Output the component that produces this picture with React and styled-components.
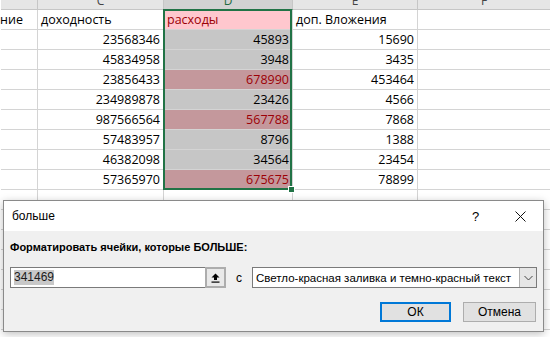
import React from 'react';
import styled, { createGlobalStyle } from 'styled-components';

const GlobalStyle = createGlobalStyle`
  html, body {
    margin: 0;
    padding: 0;
    background: #ffffff;
    overflow: hidden;
  }
`;

const cols = ['37px', '126px', '129px', '125px', '133px'];

const data = [
  [23568346, 45893, 15690],
  [45834958, 3948, 3435],
  [23856433, 678990, 453464],
  [234989878, 23426, 4566],
  [987566564, 567788, 7868],
  [57483957, 8796, 1388],
  [46382098, 34564, 23454],
  [57365970, 675675, 78899],
];

const LIMIT = 341469;

const Page = styled.div`
  position: relative;
  width: 550px;
  height: 337px;
  overflow: hidden;
  font-family: 'Open Sans', 'Liberation Sans', sans-serif;
`;

const Sheet = styled.div`
  display: flex;
  flex-direction: column;
  margin-left: 1px;
`;

const Row = styled.div`
  display: grid;
  grid-template-columns: ${cols.join(' ')};
  height: ${(p) => p.$h || 20}px;
`;

// column letters are cut off by the top edge, as in the screenshot
const HeadCell = styled.div`
  background: ${(p) => (p.$active ? '#d2d2d2' : '#e6e6e6')};
  border-right: 1px solid #c6c6c6;
  border-bottom: 1px solid ${(p) => (p.$active ? '#217346' : '#c6c6c6')};
  color: ${(p) => (p.$active ? '#1e6b41' : '#444')};
  font-size: 12px;
  line-height: 2px;
  text-align: center;
  overflow: hidden;
  box-sizing: border-box;
`;

const Cell = styled.div`
  box-sizing: border-box;
  border-right: 1px solid #d4d4d4;
  border-bottom: 1px solid #d4d4d4;
  background: ${(p) => p.$bg || '#ffffff'};
  color: ${(p) => p.$color || '#000'};
  font-size: 12.5px;
  line-height: 19px;
  padding: 0 ${(p) => p.$pr || 3}px 0 3px;
  text-align: ${(p) => (p.$num ? 'right' : 'left')};
  white-space: nowrap;
  overflow: ${(p) => (p.$spill ? 'visible' : 'hidden')};
  direction: ${(p) => (p.$spill === 'left' ? 'rtl' : 'ltr')};
  position: relative;
`;

const Selection = styled.div`
  position: absolute;
  left: 163px;
  top: 9px;
  width: 129px;
  height: 181px;
  border: 2px solid #217346;
  box-sizing: border-box;
  pointer-events: none;

  &::after {
    content: '';
    position: absolute;
    right: -5px;
    bottom: -5px;
    width: 5px;
    height: 5px;
    background: #217346;
    border: 1px solid #fff;
  }
`;

const Dialog = styled.div`
  position: absolute;
  left: 3px;
  top: 200px;
  width: 541px;
  height: 132px;
  box-sizing: border-box;
  border: 1px solid #8a8a8a;
  background: #f0f0f0;
  box-shadow: 0 2px 8px rgba(0, 0, 0, 0.25);
  display: flex;
  flex-direction: column;
  font-family: 'Liberation Sans', Arial, sans-serif;
  font-size: 11.5px;
  color: #000;
`;

const TitleBar = styled.div`
  height: 30px;
  background: #ffffff;
  display: flex;
  align-items: center;
  padding: 0 0 0 8px;
  font-size: 12px;
`;

const Title = styled.span`
  flex: 1;
`;

const TitleIcon = styled.span`
  width: 45px;
  display: flex;
  justify-content: center;
  align-items: center;
  font-size: ${(p) => p.$size || 12}px;
`;

const Body = styled.div`
  flex: 1;
  display: flex;
  flex-direction: column;
  padding: 9px 6px 0 6px;
`;

const Label = styled.div`
  font-weight: bold;
  font-size: 11px;
  height: 14px;
  line-height: 14px;
`;

const InputRow = styled.div`
  display: flex;
  align-items: center;
  margin-top: 13px;
  height: 21px;
`;

const InputBox = styled.div`
  width: 195px;
  height: 21px;
  box-sizing: border-box;
  border: 1px solid #7a7a7a;
  border-right: none;
  background: #fff;
  display: flex;
  align-items: center;
  padding-left: 3px;
`;

const Selected = styled.span`
  background: #c8c8c8;
  color: #1a1a1a;
  font-size: 12px;
  line-height: 15px;
`;

const RefButton = styled.div`
  width: 21px;
  height: 21px;
  box-sizing: border-box;
  border: 2px solid #adadad;
  background: #e9e9e9;
  display: flex;
  align-items: center;
  justify-content: center;
`;

const Conj = styled.span`
  width: 26px;
  text-align: center;
  font-size: 12px;
`;

const Combo = styled.div`
  width: 285px;
  height: 21px;
  box-sizing: border-box;
  border: 1px solid #7a7a7a;
  background: #fff;
  display: flex;
  align-items: center;
  font-size: 11.5px;
  padding-left: 3px;
`;

const ComboText = styled.span`
  flex: 1;
  white-space: nowrap;
  overflow: hidden;
`;

const ComboArrow = styled.div`
  width: 17px;
  height: 19px;
  box-sizing: border-box;
  border-left: 1px solid #adadad;
  background: #e6e6e6;
  display: flex;
  align-items: center;
  justify-content: center;
`;

const ButtonRow = styled.div`
  display: flex;
  justify-content: flex-end;
  gap: 12px;
  margin-top: 14px;
  padding-right: 1px;
`;

const Button = styled.div`
  width: ${(p) => p.$w}px;
  height: 20px;
  box-sizing: border-box;
  background: #e1e1e1;
  border: ${(p) => (p.$primary ? '2px solid #0078d7' : '1px solid #adadad')};
  display: flex;
  align-items: center;
  justify-content: center;
  font-size: 12px;
`;

export default function App() {
  const header = ['', 'C', 'D', 'E', 'F'];
  return (
    <Page>
      <GlobalStyle />
      <Sheet>
        <Row $h={10}>
          {header.map((h, i) => (
            <HeadCell key={i} $active={h === 'D'}>
              {h}
            </HeadCell>
          ))}
        </Row>
        <Row>
          <Cell $num $pr={14} $spill="left">ние</Cell>
          <Cell>доходность</Cell>
          <Cell $bg="#ffc7ce" $color="#9c0006">расходы</Cell>
          <Cell $spill="right">доп. Вложения</Cell>
          <Cell />
        </Row>
        {data.map((r, i) => {
          const hot = r[1] > LIMIT;
          return (
            <Row key={i}>
              <Cell />
              <Cell $num>{r[0]}</Cell>
              <Cell $num $bg={hot ? '#c4989c' : '#c6c6c6'} $color={hot ? '#9c0006' : '#000'}>
                {r[1]}
              </Cell>
              <Cell $num>{r[2]}</Cell>
              <Cell />
            </Row>
          );
        })}
        {[0, 1, 2, 3, 4, 5, 6].map((i) => (
          <Row key={'e' + i}>
            <Cell />
            <Cell />
            <Cell />
            <Cell />
            <Cell />
          </Row>
        ))}
      </Sheet>
      <Selection />

      <Dialog>
        <TitleBar>
          <Title>больше</Title>
          <TitleIcon $size={13}>?</TitleIcon>
          <TitleIcon>
            <svg width="11" height="11" viewBox="0 0 11 11">
              <path d="M0.5 0.5 L10.5 10.5 M10.5 0.5 L0.5 10.5" stroke="#111" strokeWidth="1" fill="none" />
            </svg>
          </TitleIcon>
        </TitleBar>
        <Body>
          <Label>Форматировать ячейки, которые БОЛЬШЕ:</Label>
          <InputRow>
            <InputBox>
              <Selected>341469</Selected>
            </InputBox>
            <RefButton>
              <svg width="9" height="10" viewBox="0 0 9 10">
                <path d="M4.5 0.5 L0.5 4.5 H3 V7 H6 V4.5 H8.5 Z" fill="#000" />
                <rect x="0.5" y="8.5" width="8" height="1.2" fill="#000" />
              </svg>
            </RefButton>
            <Conj>с</Conj>
            <Combo>
              <ComboText>Светло-красная заливка и темно-красный текст</ComboText>
              <ComboArrow>
                <svg width="9" height="6" viewBox="0 0 9 6">
                  <path d="M0.5 1 L4.5 5 L8.5 1" stroke="#444" strokeWidth="1" fill="none" />
                </svg>
              </ComboArrow>
            </Combo>
          </InputRow>
          <ButtonRow>
            <Button $primary $w={71}>ОК</Button>
            <Button $w={73}>Отмена</Button>
          </ButtonRow>
        </Body>
      </Dialog>
    </Page>
  );
}
